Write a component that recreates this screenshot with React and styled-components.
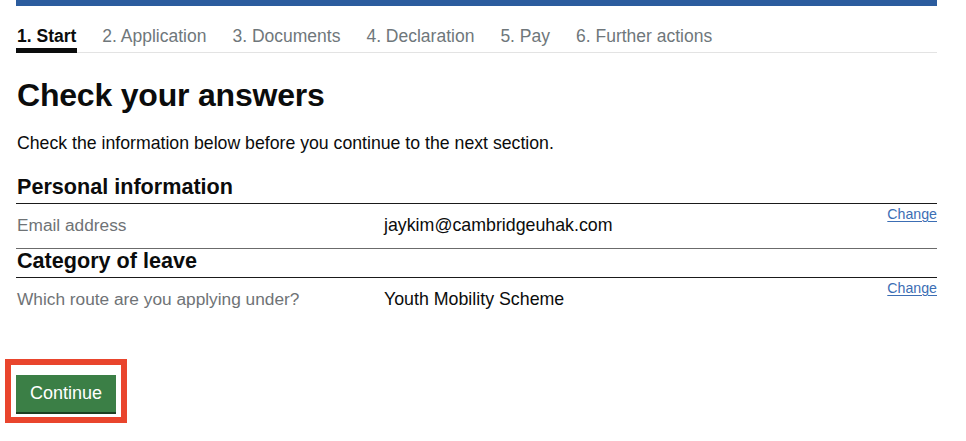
import React from 'react';
import styled, { createGlobalStyle } from 'styled-components';

const GlobalStyle = createGlobalStyle`
  body {
    margin: 0;
    background: #ffffff;
    font-family: "Liberation Sans", Arial, sans-serif;
    color: #0b0c0c;
  }
`;

const steps = ['1. Start', '2. Application', '3. Documents', '4. Declaration', '5. Pay', '6. Further actions'];

const sections = [
  {
    title: 'Personal information',
    rows: [{ label: 'Email address', value: 'jaykim@cambridgeuhak.com' }],
  },
  {
    title: 'Category of leave',
    rows: [{ label: 'Which route are you applying under?', value: 'Youth Mobility Scheme' }],
  },
];

const App = () => {
  return (
    <Page>
      <GlobalStyle />
      <TopBar />
      <StepNav>
        {steps.map((s, i) => (
          <Step key={s} active={i === 0}>{s}</Step>
        ))}
      </StepNav>

      <Title>Check your answers</Title>
      <Lead>Check the information below before you continue to the next section.</Lead>

      {sections.map((section, si) => (
        <Section key={section.title}>
          <SectionTitle first={si === 0}>{section.title}</SectionTitle>
          {section.rows.map((row, ri) => (
            <Row key={row.label} last={si === sections.length - 1 && ri === section.rows.length - 1}>
              <Label>{row.label}</Label>
              <Value>{row.value}</Value>
              <ChangeLink href="#">Change</ChangeLink>
            </Row>
          ))}
        </Section>
      ))}

      <Highlight>
        <ContinueButton>Continue</ContinueButton>
      </Highlight>
    </Page>
  );
};

export default App;

const Page = styled.div`
  width: 921px;
  margin-left: 16px;
  padding-bottom: 20px;
`;

const TopBar = styled.div`
  height: 6px;
  background-color: #2b5c9e;
`;

const StepNav = styled.nav`
  display: flex;
  gap: 24px;
  padding-top: 18px;
  border-bottom: 1px solid #e3e3e3;
`;

const Step = styled.div`
  font-size: 17.5px;
  line-height: 24px;
  padding: 0 1px 0;
  margin-bottom: -1px;
  color: ${p => (p.active ? '#0b0c0c' : '#6f777b')};
  font-weight: ${p => (p.active ? 700 : 400)};
  border-bottom: 5px solid ${p => (p.active ? '#0b0c0c' : 'transparent')};
`;

const Title = styled.h1`
  margin: 24px 0 0;
  padding-left: 1px;
  font-size: 32px;
  line-height: 36px;
  font-weight: 700;
  letter-spacing: -0.2px;
`;

const Lead = styled.p`
  margin: 19px 0 0;
  padding-left: 1px;
  font-size: 17.7px;
  line-height: 22px;
`;

const Section = styled.section`
  display: flex;
  flex-direction: column;
`;

const SectionTitle = styled.h2`
  margin: ${p => (p.first ? '22px 0 0' : '1px 0 0')};
  padding: 0 0 5px 1px;
  font-size: 21.6px;
  line-height: 22px;
  font-weight: 700;
  border-bottom: 1px solid #1a1a1a;
`;

const Row = styled.div`
  display: grid;
  grid-template-columns: 368px 1fr auto;
  align-items: start;
  border-bottom: 1px solid ${p => (p.last ? 'transparent' : '#6b6b6b')};
  min-height: 44px;
`;

const Label = styled.div`
  padding: 9px 0 0 1px;
  font-size: 17.3px;
  line-height: 24px;
  color: #6f7376;
`;

const Value = styled.div`
  padding-top: 9px;
  font-size: 17.8px;
  line-height: 24px;
  color: #0b0c0c;
`;

const ChangeLink = styled.a`
  padding-top: 1px;
  font-size: 14.2px;
  line-height: 18px;
  color: #3c6eb4;
  text-decoration: underline;
  text-underline-offset: 2px;
`;

const Highlight = styled.div`
  display: inline-flex;
  margin: 36px 0 0 -11px;
  padding: 10px 5px 3px;
  border: 6px solid #e9452d;
`;

const ContinueButton = styled.button`
  width: 100px;
  height: 39px;
  padding: 0 0 2px;
  border: none;
  border-radius: 0;
  background-color: #3b7f46;
  box-shadow: inset 0 -2px 0 #1c3f22;
  color: #ffffff;
  font-family: "Liberation Sans", Arial, sans-serif;
  font-size: 18px;
  cursor: pointer;
`;
